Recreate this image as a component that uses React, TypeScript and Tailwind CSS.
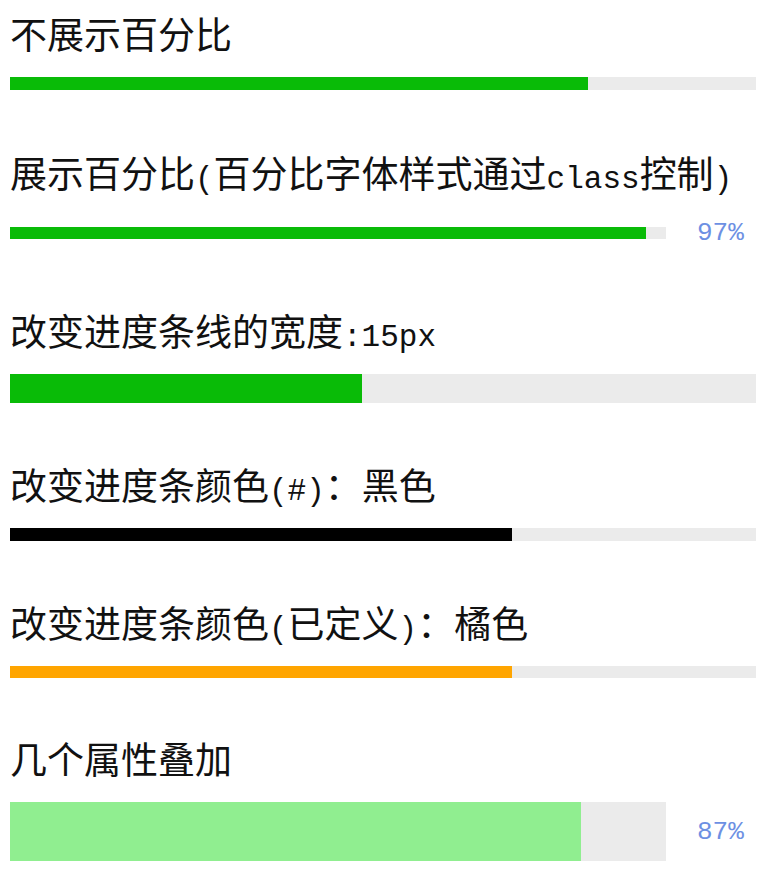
import React from "react";

const L = ({ children }: { children: React.ReactNode }) => (
  <span className="font-['Liberation_Mono',monospace] text-[31px] leading-none">{children}</span>
);

function Title({ children }: { children: React.ReactNode }) {
  return (
    <div className="h-[44px] text-[37px] leading-[44px] text-[#111] font-['Noto_Sans_CJK_SC','Noto_Sans',sans-serif] whitespace-nowrap">
      {children}
    </div>
  );
}

function Bar({
  pct,
  color,
  height,
  info,
}: {
  pct: number;
  color: string;
  height: string;
  info?: string;
}) {
  return (
    <div className={`flex items-center mt-[22px] ${info ? "min-h-[34px]" : ""}`}>
      <div className={`flex-1 bg-[#ebebeb] ${height}`}>
        <div className={`h-full ${color}`} style={{ width: `${pct}%` }} />
      </div>
      {info && (
        <div className="ml-[31px] w-[59px] text-[26px] leading-[34px] text-[#6d90e3] font-['Liberation_Mono',monospace]">
          {info}
        </div>
      )}
    </div>
  );
}

export default function App() {
  return (
    <div className="bg-white min-h-[876px] pl-[10px] pr-[26px] pt-[11px]">
      <Title>不展示百分比</Title>
      <Bar pct={77.5} color="bg-[#09bb07]" height="h-[13px]" />

      <div className="mt-[60px]">
        <Title>
          展示百分比<L>(</L>百分比字体样式通过<L>class</L>控制<L>)</L>
        </Title>
        <Bar pct={97} color="bg-[#09bb07]" height="h-[12px]" info="97%" />
      </div>

      <div className="mt-[58px]">
        <Title>
          改变进度条线的宽度<L>:15px</L>
        </Title>
        <Bar pct={47.2} color="bg-[#09bb07]" height="h-[29px]" />
      </div>

      <div className="mt-[59px]">
        <Title>
          改变进度条颜色<L>(#)</L>：黑色
        </Title>
        <Bar pct={67.3} color="bg-black" height="h-[13px]" />
      </div>

      <div className="mt-[59px]">
        <Title>
          改变进度条颜色<L>(</L>已定义<L>)</L>：橘色
        </Title>
        <Bar pct={67.3} color="bg-[#ffa500]" height="h-[12px]" />
      </div>

      <div className="mt-[58px]">
        <Title>几个属性叠加</Title>
        <Bar pct={87} color="bg-[#90ee90]" height="h-[59px]" info="87%" />
      </div>
    </div>
  );
}
